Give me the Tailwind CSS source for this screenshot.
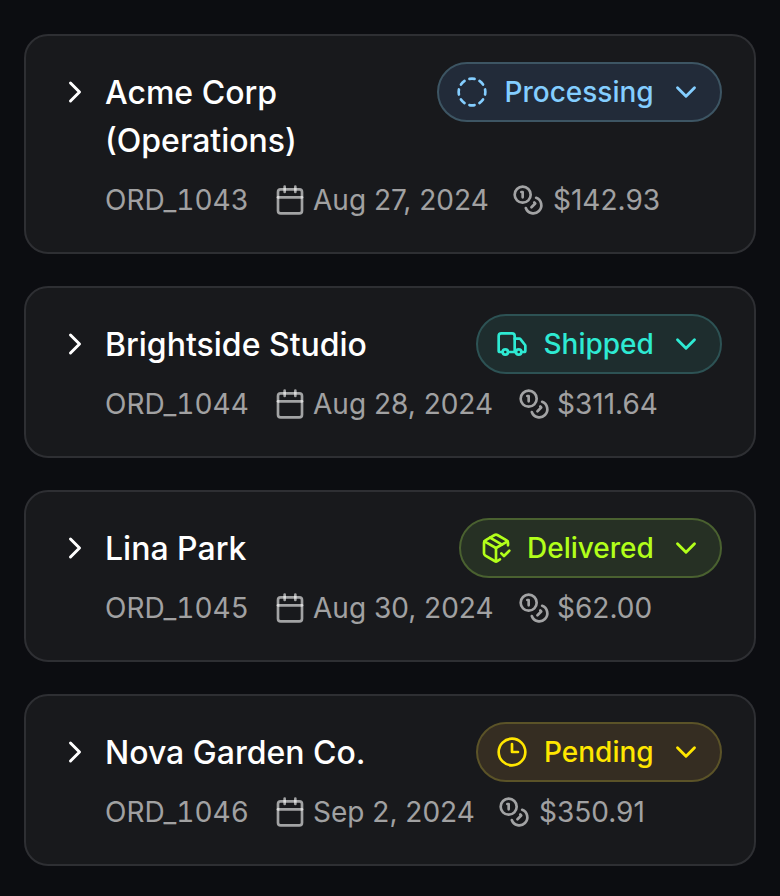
<!DOCTYPE html>
<html lang="en">
<head>
<meta charset="utf-8">
<title>Orders</title>
<script src="https://cdn.jsdelivr.net/npm/@tailwindcss/browser@4"></script>
</head>
<body class="h-[896px] overflow-hidden bg-[#0c0d11] font-['Inter',sans-serif] text-white antialiased">
<svg class="hidden" fill="none" stroke="currentColor" stroke-linecap="round" stroke-linejoin="round">
  <symbol id="right" viewBox="0 0 24 24"><path d="m9 18 6-6-6-6"/></symbol>
  <symbol id="down" viewBox="0 0 24 24"><path d="m6 9 6 6 6-6"/></symbol>
  <symbol id="calendar" viewBox="0 0 24 24"><path d="M8 2v4"/><path d="M16 2v4"/><rect width="18" height="18" x="3" y="4" rx="2"/><path d="M3 10h18"/></symbol>
  <symbol id="coins" viewBox="0 0 24 24"><circle cx="8" cy="8" r="6"/><path d="M18.09 10.37A6 6 0 1 1 10.34 18"/><path d="M7 6h1v4"/><path d="m16.71 13.88.7.71-2.82 2.82"/></symbol>
  <symbol id="dashed" viewBox="0 0 24 24"><path d="M10.1 2.182a10 10 0 0 1 3.8 0"/><path d="M13.9 21.818a10 10 0 0 1-3.8 0"/><path d="M17.609 3.721a10 10 0 0 1 2.69 2.7"/><path d="M2.182 13.9a10 10 0 0 1 0-3.8"/><path d="M20.279 17.609a10 10 0 0 1-2.7 2.69"/><path d="M21.818 10.1a10 10 0 0 1 0 3.8"/><path d="M3.721 6.391a10 10 0 0 1 2.7-2.69"/><path d="M6.391 20.279a10 10 0 0 1-2.69-2.7"/></symbol>
  <symbol id="truck" viewBox="0 0 24 24"><path d="M14 18V6a2 2 0 0 0-2-2H4a2 2 0 0 0-2 2v11a1 1 0 0 0 1 1h2"/><path d="M15 18H9"/><path d="M19 18h2a1 1 0 0 0 1-1v-3.65a1 1 0 0 0-.22-.624l-3.48-4.35A1 1 0 0 0 17.52 8H14"/><circle cx="17" cy="18" r="2"/><circle cx="7" cy="18" r="2"/></symbol>
  <symbol id="package" viewBox="0 0 24 24"><path d="m16 16 2 2 4-4"/><path d="M21 10V8a2 2 0 0 0-1-1.73l-7-4a2 2 0 0 0-2 0l-7 4A2 2 0 0 0 3 8v8a2 2 0 0 0 1 1.73l7 4a2 2 0 0 0 2 0l2-1.14"/><path d="m7.5 4.27 9 5.15"/><path d="M3.29 7 12 12l8.71-5"/><path d="M12 22V12"/></symbol>
  <symbol id="clock" viewBox="0 0 24 24"><circle cx="12" cy="12" r="10"/><path d="M12 6v6h4.5"/></symbol>
</svg>
<main class="flex flex-col gap-8 px-6 pt-[34px]">

  <article class="flex h-[220px] rounded-3xl border-2 border-[#2e2f33] bg-[#18191c] pt-[26px] pr-8 pl-[31px]">
    <svg class="mt-3 mr-3 size-9 shrink-0 fill-none stroke-current stroke-2 [stroke-linecap:round] [stroke-linejoin:round]"><use href="#right"/></svg>
    <div class="min-w-0 flex-1">
      <div class="flex items-start justify-between">
        <h2 class="w-[260px] pt-[7px] text-[32px] leading-12 font-medium">Acme Corp (Operations)</h2>
        <button class="flex h-[60px] w-[285px] items-center rounded-full border-2 border-[#3d5563] bg-[#222b39] pl-[17px] text-[28px] font-medium text-[#84ceff]"><svg class="mr-[16.5px] size-8 fill-none stroke-current stroke-2 [stroke-linecap:round] [stroke-linejoin:round]"><use href="#dashed"/></svg><span class="flex-1 text-left">Processing</span><svg class="mr-[17px] size-[34px] fill-none stroke-current stroke-2 [stroke-linecap:round] [stroke-linejoin:round]"><use href="#down"/></svg></button>
      </div>
      <div class="mt-[15px] flex h-10 items-center text-[28px] whitespace-nowrap text-white/60"><span class="w-[169px] tabular-nums">ORD_1043</span><svg class="mr-[7px] size-8 fill-none stroke-current stroke-2 [stroke-linecap:round] [stroke-linejoin:round]"><use href="#calendar"/></svg><span class="w-[199px]">Aug 27, 2024</span><svg class="mr-[9px] size-8 fill-none stroke-current stroke-2 [stroke-linecap:round] [stroke-linejoin:round]"><use href="#coins"/></svg><span>$142.93</span></div>
    </div>
  </article>

  <article class="flex h-[172px] rounded-3xl border-2 border-[#2e2f33] bg-[#18191c] pt-[26px] pr-8 pl-[31px]">
    <svg class="mt-3 mr-3 size-9 shrink-0 fill-none stroke-current stroke-2 [stroke-linecap:round] [stroke-linejoin:round]"><use href="#right"/></svg>
    <div class="min-w-0 flex-1">
      <div class="flex items-start justify-between">
        <h2 class="pt-[7px] text-[32px] leading-12 font-medium">Brightside Studio</h2>
        <button class="flex h-[60px] w-[246px] items-center rounded-full border-2 border-[#2d5254] bg-[#1e2d2e] pl-[18px] text-[28px] font-medium text-[#2eead3]"><svg class="mr-[15.5px] size-8 fill-none stroke-current stroke-2 [stroke-linecap:round] [stroke-linejoin:round]"><use href="#truck"/></svg><span class="flex-1 text-left">Shipped</span><svg class="mr-[17px] size-[34px] fill-none stroke-current stroke-2 [stroke-linecap:round] [stroke-linejoin:round]"><use href="#down"/></svg></button>
      </div>
      <div class="mt-[10px] flex h-10 items-center text-[28px] whitespace-nowrap text-white/60"><span class="w-[169px] tabular-nums">ORD_1044</span><svg class="mr-[7px] size-8 fill-none stroke-current stroke-2 [stroke-linecap:round] [stroke-linejoin:round]"><use href="#calendar"/></svg><span class="w-[205px]">Aug 28, 2024</span><svg class="mr-[7px] size-8 fill-none stroke-current stroke-2 [stroke-linecap:round] [stroke-linejoin:round]"><use href="#coins"/></svg><span>$311.64</span></div>
    </div>
  </article>

  <article class="flex h-[172px] rounded-3xl border-2 border-[#2e2f33] bg-[#18191c] pt-[26px] pr-8 pl-[31px]">
    <svg class="mt-3 mr-3 size-9 shrink-0 fill-none stroke-current stroke-2 [stroke-linecap:round] [stroke-linejoin:round]"><use href="#right"/></svg>
    <div class="min-w-0 flex-1">
      <div class="flex items-start justify-between">
        <h2 class="pt-[7px] text-[32px] leading-12 font-medium">Lina Park</h2>
        <button class="flex h-[60px] w-[263px] items-center rounded-full border-2 border-[#4a6130] bg-[#263024] pl-[19px] text-[28px] font-medium text-[#b2ff1a]"><svg class="mr-[15px] size-8 fill-none stroke-current stroke-2 [stroke-linecap:round] [stroke-linejoin:round]"><use href="#package"/></svg><span class="flex-1 text-left">Delivered</span><svg class="mr-[17px] size-[34px] fill-none stroke-current stroke-2 [stroke-linecap:round] [stroke-linejoin:round]"><use href="#down"/></svg></button>
      </div>
      <div class="mt-[10px] flex h-10 items-center text-[28px] whitespace-nowrap text-white/60"><span class="w-[169px] tabular-nums">ORD_1045</span><svg class="mr-[7px] size-8 fill-none stroke-current stroke-2 [stroke-linecap:round] [stroke-linejoin:round]"><use href="#calendar"/></svg><span class="w-[205px]">Aug 30, 2024</span><svg class="mr-[7px] size-8 fill-none stroke-current stroke-2 [stroke-linecap:round] [stroke-linejoin:round]"><use href="#coins"/></svg><span>$62.00</span></div>
    </div>
  </article>

  <article class="flex h-[172px] rounded-3xl border-2 border-[#2e2f33] bg-[#18191c] pt-[26px] pr-8 pl-[31px]">
    <svg class="mt-3 mr-3 size-9 shrink-0 fill-none stroke-current stroke-2 [stroke-linecap:round] [stroke-linejoin:round]"><use href="#right"/></svg>
    <div class="min-w-0 flex-1">
      <div class="flex items-start justify-between">
        <h2 class="pt-[7px] text-[32px] leading-12 font-medium">Nova Garden Co.</h2>
        <button class="flex h-[60px] w-[246px] items-center rounded-full border-2 border-[#5b5328] bg-[#352d22] pl-[18px] text-[28px] font-medium text-[#ffe600]"><svg class="mr-4 size-8 fill-none stroke-current stroke-2 [stroke-linecap:round] [stroke-linejoin:round]"><use href="#clock"/></svg><span class="flex-1 text-left">Pending</span><svg class="mr-[17px] size-[34px] fill-none stroke-current stroke-2 [stroke-linecap:round] [stroke-linejoin:round]"><use href="#down"/></svg></button>
      </div>
      <div class="mt-[10px] flex h-10 items-center text-[28px] whitespace-nowrap text-white/60"><span class="w-[169px] tabular-nums">ORD_1046</span><svg class="mr-[7px] size-8 fill-none stroke-current stroke-2 [stroke-linecap:round] [stroke-linejoin:round]"><use href="#calendar"/></svg><span class="w-[185px]">Sep 2, 2024</span><svg class="mr-[9px] size-8 fill-none stroke-current stroke-2 [stroke-linecap:round] [stroke-linejoin:round]"><use href="#coins"/></svg><span>$350.91</span></div>
    </div>
  </article>
</main>
</body>
</html>
